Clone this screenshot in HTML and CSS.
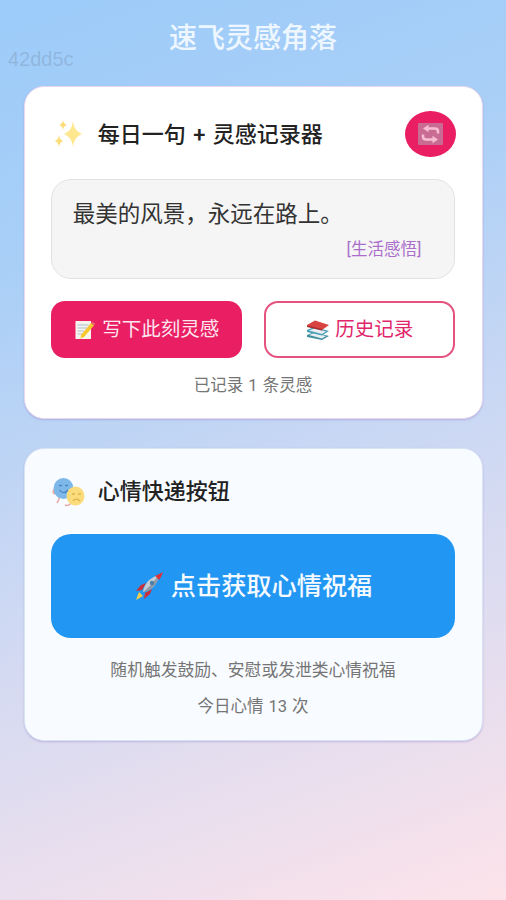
FILE: index.html
```html
<!DOCTYPE html>
<html lang="zh-CN">
<head>
<meta charset="utf-8">
<title>速飞灵感角落</title>
<link rel="stylesheet" href="styles.css">
</head>
<body>
<div class="page">
  <div class="watermark">42dd5c</div>
  <h1 class="title">速飞灵感角落</h1>

  <section class="card card-quote">
    <header class="card-head">
      <svg class="head-icon" viewBox="0 0 34 34" aria-hidden="true">
        <path fill="#fee78f" d="M22 4c1 7 3.500 11 9.500 13-6 2-8.500 6-9.500 13-1-7-3.500-11-9.500-13C18.500 15 21 11 22 4z"/>
        <path fill="#fddc7a" d="M12 3c.5 3 1.500 4.300 4 5-2.500.8-3.500 2-4 5-.5-3-1.500-4.200-4-5 2.500-.7 3.500-2 4-5z"/>
        <path fill="#fddc7a" d="M8 18c.5 3.500 1.700 5 4.500 6-2.800 1-4 2.500-4.500 6-.5-3.500-1.700-5-4.500-6 2.800-1 4-2.500 4.500-6z"/>
      </svg>
      <h2 class="head-text">每日一句 + 灵感记录器</h2>
      <button class="refresh" type="button" aria-label="刷新">
        <svg class="refresh-icon" viewBox="0 0 25 22" aria-hidden="true">
          <rect width="25" height="22" rx="1" fill="#c96c94"/>
          <path fill="none" stroke="#f7bdd2" stroke-width="2.600" stroke-linejoin="round" d="M9 5.500h8c2 0 3 1 3 3v2M16 16.500H8c-2 0-3-1-3-3v-2"/>
          <path fill="#f7bdd2" d="M10.500 1.800v7.400L5 5.500zM14.500 12.800v7.400l5.500-3.700z"/>
        </svg>
      </button>
    </header>

    <div class="quote-box">
      <p class="quote">最美的风景，永远在路上。</p>
      <p class="quote-tag">[生活感悟]</p>
    </div>

    <div class="actions">
      <button class="btn btn-solid" type="button">
        <svg class="btn-icon" viewBox="0 0 22 22" aria-hidden="true">
          <path fill="#f7f4ec" d="M1.500 2h15.500v18H1.500z"/>
          <path stroke="#a9bfd6" stroke-width="1" d="M3.500 6h11M3.500 9h10M3.500 12h7M3.500 15h5"/>
          <path fill="#f8c62f" d="M17 4l3 2.500L10 18l-3.500 1.500.5-3.500z"/>
          <path fill="#e8636a" d="M17 4l1.500-1.500 3 2.500L20 6.500z"/>
        </svg>
        <span>写下此刻灵感</span>
      </button>
      <button class="btn btn-outline" type="button">
        <svg class="btn-icon" viewBox="0 0 24 22" aria-hidden="true">
          <path fill="#3f8f9f" d="M1 16l7-3 15 4-7 4-15-3z"/>
          <path fill="#e9eef0" d="M3 16l5-2 12 3-4 2.500z"/>
          <path fill="#4a9fb8" d="M1 11l7-3 15 4-7 4.500-15-3.500z"/>
          <path fill="#e9eef0" d="M3 11.500l5-2 12 3-4 2.500z"/>
          <path fill="#d8433f" d="M1 6l8-4.500L23 6l-7 5L1 7.500z"/>
          <path fill="#a92c30" d="M1 6.500l15 3.500v1.500L1 8z"/>
        </svg>
        <span>历史记录</span>
      </button>
    </div>

    <p class="note">已记录 1 条灵感</p>
  </section>

  <section class="card card-mood">
    <header class="card-head mood-head">
      <svg class="head-icon" viewBox="0 0 34 34" aria-hidden="true">
        <path fill="none" stroke="#e9a6a0" stroke-width="1.500" d="M6 14C2 15 1 19 4 20M8 22c1 3-1 5-2 7"/>
        <ellipse cx="12.500" cy="14.500" rx="10" ry="10.500" fill="#7db8e8"/>
        <path fill="none" stroke="#4a86c6" stroke-width="1.400" d="M8 11.500h3M14 11.500h3M8.500 16c2 3.500 6 3.500 8.500 0"/>
        <path fill="none" stroke="#e9a6a0" stroke-width="1.500" d="M30 20c3 1 3 5 1 6M20 29c-1 2-4 3-6 2"/>
        <ellipse cx="24.500" cy="22" rx="9" ry="9.500" fill="#fbdc7c"/>
        <path fill="none" stroke="#e0b24a" stroke-width="1.300" d="M21 20h3M27 20h3M22 27c1.500-2.500 5-2.500 7 0"/>
      </svg>
      <h2 class="head-text">心情快递按钮</h2>
    </header>

    <button class="mood-btn" type="button">
      <svg class="rocket" viewBox="0 0 30 30" aria-hidden="true">
        <path fill="#f7d04a" d="M5 21l4 4-7 4z"/>
        <path fill="#c9303a" d="M7 14l5-2-4 7-6 1zM16 23l2-5-7 4-1 6z"/>
        <path fill="#c5ced6" d="M9 21c1-8 7-15 16-17-1 9-8 16-16 17z"/>
        <path fill="#8d99a6" d="M9 21c5-4 11-10 16-17-1 9-8 16-16 17z"/>
        <path fill="#d9343c" d="M21 4.800c2-.8 5-1.800 8-3.800-1 3-2.500 6-3.800 8z"/>
        <circle cx="18" cy="12" r="2.200" fill="#4a7fa8"/>
      </svg>
      <span>点击获取心情祝福</span>
    </button>

    <p class="note note-hint">随机触发鼓励、安慰或发泄类心情祝福</p>
    <p class="note note-count">今日心情 13 次</p>
  </section>
</div>
</body>
</html>
```
FILE: styles.css
```css
* { box-sizing: border-box; }
html, body { margin: 0; height: 100%; }
body {
  font-family: Roboto, "Noto Sans CJK SC", sans-serif;
  background: linear-gradient(160deg, #9ccbf9 0%, #a9cff7 25%, #cfd9f3 58%, #fde3ea 100%);
  min-height: 900px;
}
.page { position: relative; padding: 0 23.500px; height: 900px; overflow: hidden; }
.watermark {
  position: absolute; left: 8px; top: 49px;
  font: 20px/20px "Liberation Sans", sans-serif;
  color: rgba(90, 100, 120, 0.22);
}
.title {
  margin: 0 0 13px;
  padding: 18px 0 13px;
  font-size: 28px; line-height: 42px; font-weight: 500;
  text-align: center; color: #eef7ff;
}
.card {
  border-radius: 20px;
  border: 1px solid #e6d8f0;
  padding: 24px 26.200px;
  box-shadow: 0 1px 2px rgba(150, 130, 200, 0.45);
}
.card-quote { background: #fff; height: 333px; margin-bottom: 29px; }
.card-mood { background: #f8fbff; border-color: #d8e3f5; height: 293px; }
.card-head { display: flex; align-items: center; height: 46px; margin-bottom: 22px; }
.mood-head { height: 34px; margin-bottom: 26px; margin-top: 1px; }
.head-icon { width: 34px; height: 34px; flex: none; margin-right: 13px; }
.head-text { margin: 0; padding-top: 1px; flex: 1; font-size: 22px; line-height: 30px; font-weight: 500; color: #222; word-spacing: 2px; }
.refresh {
  width: 51px; height: 46px; flex: none; padding: 0; border: 0; margin-right: -0.700px;
  border-radius: 50%; background: #e91e63;
  display: flex; align-items: center; justify-content: center;
}
.refresh-icon { width: 25px; height: 22px; display: block; }
.quote-box {
  height: 100px; margin-bottom: 22px;
  background: #f5f5f5; border: 1.500px solid #e2e2e2; border-radius: 20px;
  padding: 18px 33px 0 21px;
}
.quote { margin: 0 0 7px; font-size: 22.500px; line-height: 33px; color: #333; }
.quote-tag { margin: 0; font-size: 16.500px; line-height: 24px; color: #ab6fcb; text-align: right; }
.actions { display: grid; grid-template-columns: 1fr 1fr; gap: 22px; margin-bottom: 18px; }
.btn {
  height: 57px; border-radius: 14px;
  display: flex; align-items: center; justify-content: center; gap: 5px;
  font: 400 19.500px/28px Roboto, "Noto Sans CJK SC", sans-serif;
  padding: 0;
}
.btn-solid { background: #e91e63; color: #fde7ef; border: 0; }
.btn-outline { background: #fff; color: #e0266a; border: 2px solid #e5527f; }
.btn-icon { width: 24px; height: 22px; flex: none; }
.note { margin: 0; font-size: 16.500px; line-height: 20px; color: #757575; text-align: center; word-spacing: 1px; }
.mood-btn {
  width: 100%; height: 104px; margin-bottom: 22px;
  border: 0; border-radius: 20px; background: #2196f3; color: #f4faff;
  display: flex; align-items: center; justify-content: center; gap: 7px;
  font: 500 25.200px/36px Roboto, "Noto Sans CJK SC", sans-serif;
  padding: 2px 0 0;
}
.rocket { width: 30px; height: 30px; flex: none; margin-top: -2px; }
.note-hint { margin-bottom: 17px; font-size: 16.800px; }
```
